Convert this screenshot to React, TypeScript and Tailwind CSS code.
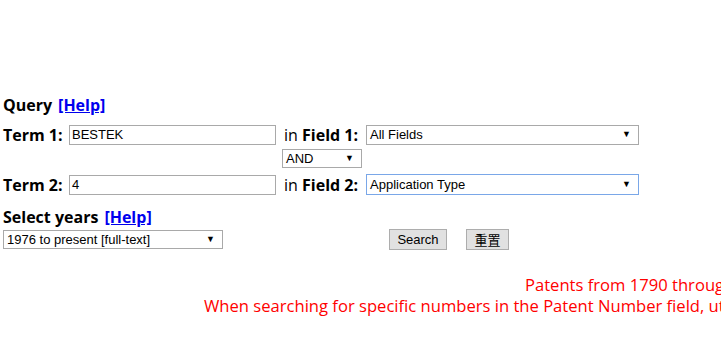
import React from "react";

function Sel({ w, h, text, focus }: { w: string; h: string; text: string; focus?: boolean }) {
  return (
    <div
      className={`${w} ${h} flex items-center justify-between bg-white border ${focus ? "border-[#7aa7e8]" : "border-[#a9a9a9]"} pl-[3px] pr-[7px] text-[13px] leading-none text-black`}
      style={{ fontFamily: '"Liberation Sans", Arial, sans-serif' }}
    >
      <span>{text}</span>
      <span className="text-[9px]">▼</span>
    </div>
  );
}

function Inp({ text }: { text: string }) {
  return (
    <div
      className="w-[207px] h-[20px] flex items-center bg-white border border-[#a9a9a9] pl-[2px] text-[13px] leading-none text-black"
      style={{ fontFamily: '"Liberation Sans", Arial, sans-serif' }}
    >
      {text}
    </div>
  );
}

export default function App() {
  const sans = { fontFamily: '"Open Sans", "Noto Sans", sans-serif' };
  return (
    <div className="w-[721px] h-[347px] overflow-hidden bg-white text-black" style={sans}>
      <div className="pt-[93px] pl-[3px]">
        <div className="h-[24px] flex items-center text-[16px] font-bold">
          <span>Query</span>
          <a className="ml-[6px] text-[#0000ee] underline">[Help]</a>
        </div>
        <div className="mt-[7px] flex items-center h-[21px]">
          <span className="w-[66px] text-[16px] font-bold">Term 1:</span>
          <Inp text="BESTEK" />
          <span className="ml-[8px] w-[82px] text-[16px]">
            in <b>Field 1:</b>
          </span>
          <Sel w="w-[273px]" h="h-[20px]" text="All Fields" />
        </div>
        <div className="mt-[4px] pl-[279px] h-[19px] flex items-center">
          <Sel w="w-[80px]" h="h-[19px]" text="AND" />
        </div>
        <div className="mt-[6px] flex items-center h-[21px]">
          <span className="w-[66px] text-[16px] font-bold">Term 2:</span>
          <Inp text="4" />
          <span className="ml-[8px] w-[82px] text-[16px]">
            in <b>Field 2:</b>
          </span>
          <Sel w="w-[273px]" h="h-[21px]" text="Application Type" focus />
        </div>
        <div className="mt-[11px] h-[22px] flex items-center text-[16px] font-bold">
          <span>Select years</span>
          <a className="ml-[6px] text-[#0000ee] underline">[Help]</a>
        </div>
        <div className="mt-[1px] flex items-center h-[21px]">
          <Sel w="w-[220px]" h="h-[19px]" text="1976 to present [full-text]" />
          <button
            className="ml-[166px] w-[58px] h-[21px] bg-[#e1e1e1] border border-[#adadad] text-[13px] leading-none text-black"
            style={{ fontFamily: '"Liberation Sans", Arial, sans-serif' }}
          >
            Search
          </button>
          <button
            className="ml-[19px] w-[43px] h-[21px] bg-[#e1e1e1] border border-[#adadad] text-[13px] leading-none text-black"
            style={{ fontFamily: '"Noto Sans CJK SC", sans-serif' }}
          >
            重置
          </button>
        </div>
      </div>
      <div className="mt-[24px] text-[16.6px] leading-[21px] text-[#f00] whitespace-nowrap">
        <div className="pl-[525px]">Patents from 1790 through 1975 are searchable only by Issue Date, Patent Number, and Current US Classification.</div>
        <div className="pl-[204px]">When searching for specific numbers in the Patent Number field, utility patent numbers are entered as one to eight numbers in length, excluding commas (which are optional, as are leading zeroes).</div>
      </div>
    </div>
  );
}
